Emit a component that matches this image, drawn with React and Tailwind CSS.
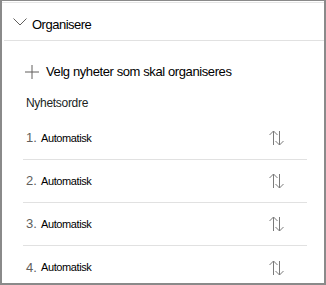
import React from "react";

const rows = [1, 2, 3, 4];

const SortIcon = () => (
  <svg width="17" height="16" viewBox="0 0 17 16" fill="none" stroke="#7a7a7a" strokeWidth="1">
    <path d="M5.5 1v14M1.5 5l4-4 4 4" />
    <path d="M11.5 1v14M7.5 11l4 4 4-4" />
  </svg>
);

export default function App() {
  return (
    <div
      className="w-[326px] h-[285px] bg-white border-t border-l-2 border-r-2 border-b-2 border-[#8a8a8a] overflow-hidden"
      style={{ fontFamily: '"Liberation Sans", Arial, sans-serif' }}
    >
      <div className="h-px bg-[#e6e6e6] mt-px" />
      <div className="ml-[2px] h-[38px] flex items-start border-b border-[#e1e1e1]">
        <svg width="14" height="8" viewBox="0 0 14 8" className="ml-[9px] mt-[15px]" fill="none" stroke="#605e5c" strokeWidth="1">
          <path d="M0.5 0.5l6.5 6.5 6.5-6.5" />
        </svg>
        <span className="ml-[5px] mt-[14px] text-[13px] leading-[16px] tracking-[-0.5px] text-black">Organisere</span>
      </div>

      <div className="pl-[21px] pr-[17px]">
        <div className="flex items-center h-[30px] mt-[16px]">
          <svg width="16" height="16" viewBox="0 0 16 16" className="ml-[1px]" fill="none" stroke="#605e5c" strokeWidth="1">
            <path d="M8 1v14M1 8h14" />
          </svg>
          <span className="ml-[6px] text-[13px] tracking-[-0.4px] text-black">
            Velg nyheter som skal organiseres
          </span>
        </div>

        <div className="mt-[8px] text-[12px] tracking-[-0.3px] text-[#201f1e] pl-[3px] h-[16px] leading-[16px]">Nyhetsordre</div>

        <div className="mt-[6px]">
          {rows.map((n, i) => (
            <div
              key={n}
              className={`flex items-center h-[43px] pl-[3px] pr-[22px] ${i < rows.length - 1 ? "border-b border-[#e1e1e1]" : ""}`}
            >
              <span className="text-[13px] text-[#605e5c] w-[15px]">{n}.</span>
              <span className="text-[11px] tracking-[-0.4px] text-black">Automatisk</span>
              <span className="ml-auto flex">
                <SortIcon />
              </span>
            </div>
          ))}
        </div>
      </div>
    </div>
  );
}
